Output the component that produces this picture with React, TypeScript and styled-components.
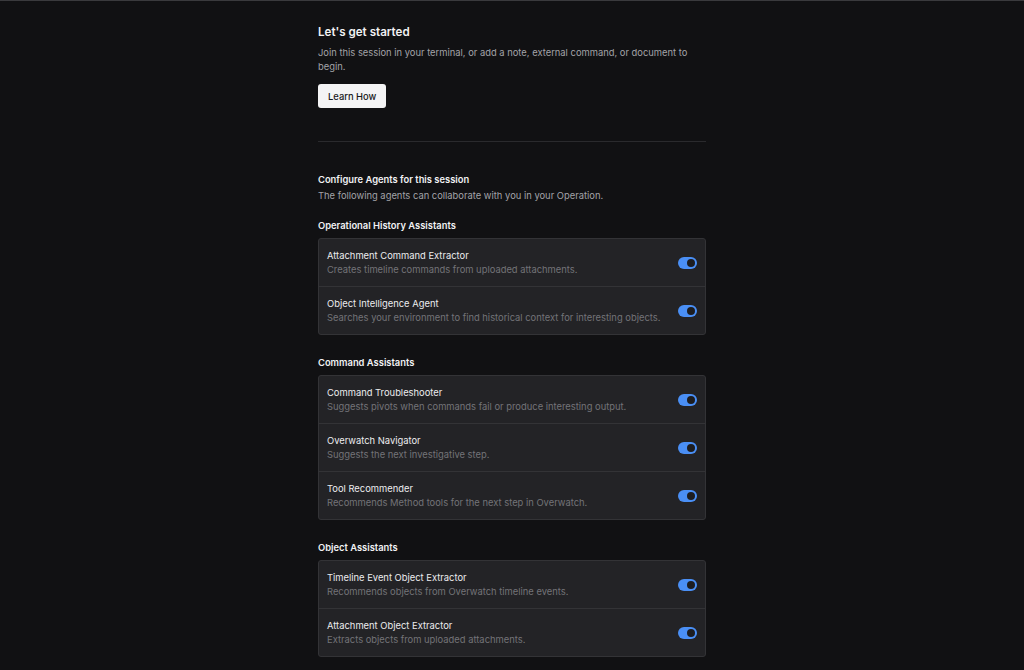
import React from "react";
import styled, { createGlobalStyle } from "styled-components";

const GlobalStyle = createGlobalStyle`
  html, body { margin: 0; padding: 0; background: #111113; }
  body { font-family: Inter, "Noto Sans", "Liberation Sans", sans-serif; -webkit-font-smoothing: antialiased; }
  * { box-sizing: border-box; }
`;

const Page = styled.div`
  min-height: 670px;
  border-top: 1px solid #3a3a3d;
  background: #111113;
  display: flex;
  justify-content: center;
`;

const Column = styled.div`
  width: 388px;
  padding-top: 22px;
  padding-bottom: 15px;
  display: flex;
  flex-direction: column;
`;

const Title = styled.h1`
  margin: 0;
  font-size: 11.6px;
  line-height: 18px;
  font-weight: 600;
  color: #f2f2f3;
`;

const Lead = styled.p`
  margin: 5px 0 0;
  font-size: 9.4px;
  line-height: 14px;
  color: #a3a3a8;
`;

const LightButton = styled.button`
  align-self: flex-start;
  margin-top: 10px;
  height: 24px;
  padding: 0 10px;
  border: none;
  border-radius: 3px;
  background: #f4f4f5;
  color: #18181b;
  font-family: inherit;
  font-size: 9.4px;
  font-weight: 500;
`;

const Divider = styled.hr`
  margin: 33px 0 0;
  border: none;
  border-top: 1px solid #2a2a2d;
`;

const ConfigTitle = styled.h2`
  margin: 30px 0 0;
  font-size: 9.4px;
  line-height: 16px;
  font-weight: 600;
  color: #f2f2f3;
`;

const ConfigSub = styled.p`
  margin: 0;
  font-size: 9.4px;
  line-height: 16px;
  color: #a3a3a8;
`;

const Section = styled.section<{ $first?: boolean }>`
  margin-top: ${(p) => (p.$first ? "15px" : "21px")};
  display: flex;
  flex-direction: column;
`;

const SectionTitle = styled.h3`
  margin: 0 0 5px;
  font-size: 9.4px;
  line-height: 14px;
  font-weight: 600;
  color: #f2f2f3;
`;

const Card = styled.div`
  background: #232326;
  border: 1px solid #333336;
  border-radius: 3px;
  overflow: hidden;
`;

const Row = styled.div`
  height: 47px;
  display: flex;
  align-items: center;
  justify-content: space-between;
  padding: 0 8px;
  & + & { border-top: 1px solid #333336; height: 48px; }
`;

const RowText = styled.div`
  display: flex;
  flex-direction: column;
`;

const RowTitle = styled.div`
  font-size: 9.4px;
  line-height: 14px;
  color: #ececee;
`;

const RowDesc = styled.div`
  font-size: 9.4px;
  line-height: 14px;
  color: #737378;
`;

const Toggle = styled.span<{ $on: boolean }>`
  position: relative;
  width: 19px;
  height: 12px;
  border-radius: 6px;
  background: ${(p) => (p.$on ? "#4a8ff5" : "#444")};
  flex-shrink: 0;
  &::after {
    content: "";
    position: absolute;
    top: 2px;
    left: ${(p) => (p.$on ? "9px" : "2px")};
    width: 8px;
    height: 8px;
    border-radius: 50%;
    background: #1d1d20;
  }
`;

type Agent = { name: string; desc: string };

const sections: { title: string; agents: Agent[] }[] = [
  {
    title: "Operational History Assistants",
    agents: [
      { name: "Attachment Command Extractor", desc: "Creates timeline commands from uploaded attachments." },
      { name: "Object Intelligence Agent", desc: "Searches your environment to find historical context for interesting objects." },
    ],
  },
  {
    title: "Command Assistants",
    agents: [
      { name: "Command Troubleshooter", desc: "Suggests pivots when commands fail or produce interesting output." },
      { name: "Overwatch Navigator", desc: "Suggests the next investigative step." },
      { name: "Tool Recommender", desc: "Recommends Method tools for the next step in Overwatch." },
    ],
  },
  {
    title: "Object Assistants",
    agents: [
      { name: "Timeline Event Object Extractor", desc: "Recommends objects from Overwatch timeline events." },
      { name: "Attachment Object Extractor", desc: "Extracts objects from uploaded attachments." },
    ],
  },
];

export default function App() {
  return (
    <>
      <GlobalStyle />
      <Page>
        <Column>
          <Title>Let's get started</Title>
          <Lead>Join this session in your terminal, or add a note, external command, or document to begin.</Lead>
          <LightButton>Learn How</LightButton>
          <Divider />
          <ConfigTitle>Configure Agents for this session</ConfigTitle>
          <ConfigSub>The following agents can collaborate with you in your Operation.</ConfigSub>
          {sections.map((s, i) => (
            <Section key={s.title} $first={i === 0}>
              <SectionTitle>{s.title}</SectionTitle>
              <Card>
                {s.agents.map((a) => (
                  <Row key={a.name}>
                    <RowText>
                      <RowTitle>{a.name}</RowTitle>
                      <RowDesc>{a.desc}</RowDesc>
                    </RowText>
                    <Toggle $on />
                  </Row>
                ))}
              </Card>
            </Section>
          ))}
        </Column>
      </Page>
    </>
  );
}
